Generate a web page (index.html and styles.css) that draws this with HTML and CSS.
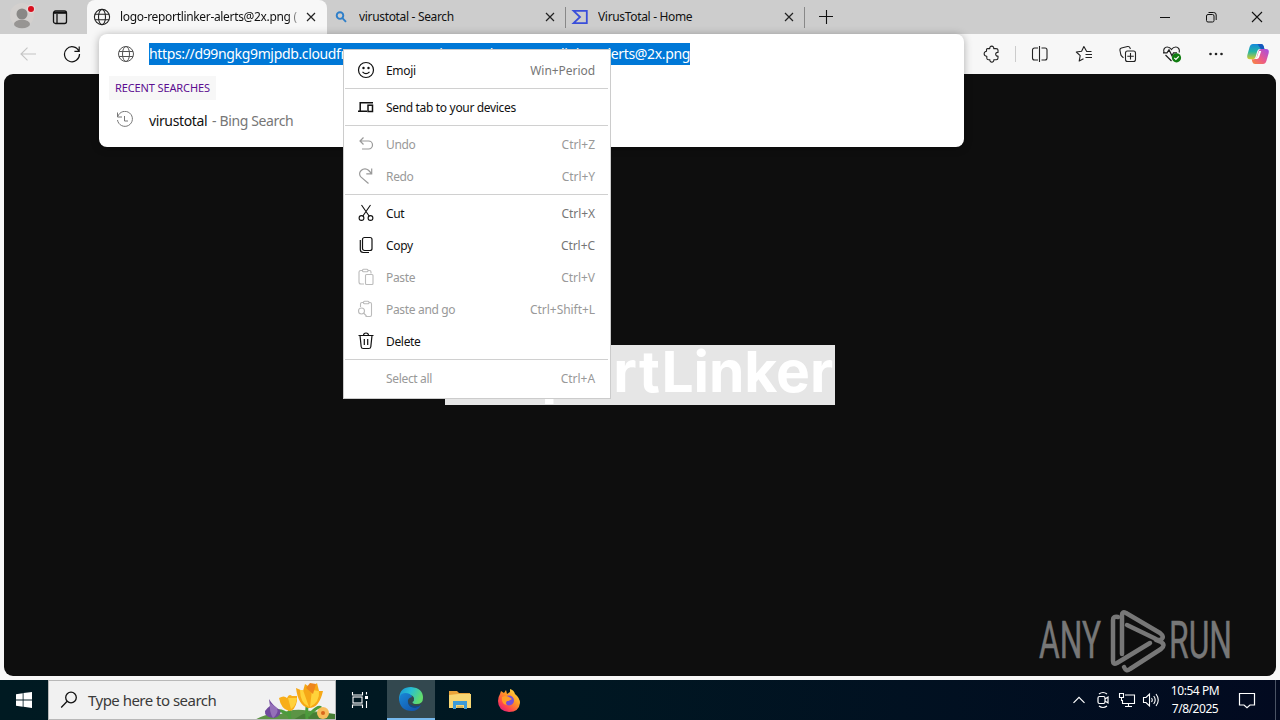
FILE: index.html
```html
<!DOCTYPE html>
<html lang="en">
<head>
    <meta charset="UTF-8">
    <meta name="viewport" content="width=device-width, initial-scale=1.0">
    <title>logo-reportlinker-alerts@2x.png</title>
    <link rel="stylesheet" href="styles.css">
</head>
<body>
    <div class="browser">
        <div class="tab-strip">
            <div class="profile">
                <svg width="32" height="30" viewBox="0 0 32 30">
                    <circle cx="16" cy="15" r="12" fill="#d3d0ce"/>
                    <circle cx="16" cy="14" r="5.5" fill="#8a8886"/>
                    <ellipse cx="16" cy="24" rx="8" ry="4.3" fill="#979593"/>
                    <circle cx="25" cy="9" r="4.3" fill="#e8d6d6"/>
                    <circle cx="25" cy="9" r="3" fill="#d80f1e"/>
                </svg>
            </div>
            <div class="tab-actions">
                <svg width="16" height="16" viewBox="0 0 16 16" fill="none" stroke="#111" stroke-width="1.3">
                    <rect x="1.5" y="2" width="13" height="12.5" rx="2"/>
                    <path d="M2 3.8h12" stroke-width="2"/>
                    <path d="M5 5v9"/>
                </svg>
            </div>
            <div class="tab active">
                <svg width="18" height="18" viewBox="0 0 18 18" fill="none" stroke="#222" stroke-width="1.1">
                    <circle cx="9" cy="9" r="7.6"/>
                    <ellipse cx="9" cy="9" rx="3.5" ry="7.6"/>
                    <path d="M2 6.3h14M2 11.7h14"/>
                </svg>
                <span class="tab-title fade">logo-reportlinker-alerts@2x.png (</span>
                <svg class="close" width="10" height="10" viewBox="0 0 10 10" stroke="#222" stroke-width="1.2"><path d="M1 1l8 8M9 1l-8 8"/></svg>
            </div>
            <div class="tab">
                <svg width="18" height="18" viewBox="0 0 18 18" fill="none" stroke="#2f7fc9" stroke-width="1.9">
                    <circle cx="8" cy="7.6" r="3.3"/>
                    <path d="M10.4 10.2l3.6 3.6"/>
                </svg>
                <span class="tab-title">virustotal - Search</span>
                <svg class="close" width="10" height="10" viewBox="0 0 10 10" stroke="#222" stroke-width="1.2"><path d="M1 1l8 8M9 1l-8 8"/></svg>
            </div>
            <div class="tab">
                <svg width="18" height="18" viewBox="0 0 18 18" fill="none" stroke="#394eda" stroke-width="1.8">
                    <path d="M2.6 2.8h13.2v12.4H2.6L9 9z"/>
                </svg>
                <span class="tab-title">VirusTotal - Home</span>
                <svg class="close" width="10" height="10" viewBox="0 0 10 10" stroke="#222" stroke-width="1.2"><path d="M1 1l8 8M9 1l-8 8"/></svg>
            </div>
            <div class="new-tab">
                <svg width="14" height="14" viewBox="0 0 14 14" stroke="#111" stroke-width="1.1"><path d="M7.500 0v14M0 6.500h14"/></svg>
            </div>
            <div class="window-buttons">
                <div><svg width="12" height="12" viewBox="0 0 12 12" fill="none" stroke="#111"><path d="M1 6.5h10"/></svg></div>
                <div><svg width="12" height="12" viewBox="0 0 12 12" fill="none" stroke="#111"><rect x="1.5" y="3.5" width="7.5" height="7.5" rx="1.5"/><path d="M3.5 1.5h5.2a2.5 2.5 0 0 1 2.5 2.5v5"/></svg></div>
                <div><svg width="12" height="12" viewBox="0 0 12 12" fill="none" stroke="#111" stroke-width="1.1"><path d="M1 1l10 10M11 1L1 11"/></svg></div>
            </div>
        </div>

        <div class="toolbar">
            <div class="nav-buttons">
                <div class="tool"><svg width="18" height="18" viewBox="0 0 18 18" fill="none" stroke="#c4c4c4" stroke-width="1.1"><path d="M17 9H2M8.5 2.7L2 9l6.5 6.3"/></svg></div>
                <div class="tool"><svg width="18" height="18" viewBox="0 0 18 18" fill="none" stroke="#111" stroke-width="1.2"><path d="M15.9 6.3A7.5 7.5 0 1 0 16.5 9M16.2 1.5v4.9h-4.8"/></svg></div>
            </div>
            <div class="tools">
                <div class="tool"><svg width="18" height="18" viewBox="0 0 18 18" fill="none" stroke="#222" stroke-width="1.1" stroke-linejoin="round"><path d="M4.500 6.200V4.600q0-1 1-1h2.300a2 2 0 1 1 3.900 0H14q2 0 2 1.400V7.400a1.900 1.900 0 1 0 0 3.700V13q0 1.700-1.700 1.700h-2.500a2 2 0 1 1-3.900 0H6.500q-1.500 0-1.700-1.500v-2a2.500 2.500 0 1 1 -.3-5z"/></svg></div>
                <div class="divider"></div>
                <div class="tool"><svg width="18" height="18" viewBox="0 0 18 18" fill="none" stroke="#222" stroke-width="1.1"><path d="M8.500 1v16M7 3H3.500a2 2 0 0 0-2 2v8a2 2 0 0 0 2 2H7M10.500 3h3.500a2 2 0 0 1 2 2v8a2 2 0 0 1-2 2h-3.500"/></svg></div>
                <div class="tool"><svg width="18" height="18" viewBox="0 0 18 18" fill="none" stroke="#222" stroke-width="1.1" stroke-linejoin="round"><path d="M16.500 6.500h-4.800L8.900 1.500 6.600 6.200l-5.300.8 3.900 3.700-1 5.300 4.300-2.200M10.500 9.500h6.500M10.500 12.500h6.500"/></svg></div>
                <div class="tool"><svg width="18" height="18" viewBox="0 0 18 18" fill="none" stroke="#222" stroke-width="1.1"><rect x="6.500" y="6" width="10" height="10.500" rx="2"/><path d="M11.500 8v6.500M8.300 11.300h6.500M4.500 12.800L2.600 11Q2 10.300 1.800 9.500L1 5.500q-.4-2 1.500-2.500l6-1.500q2-.3 2.500 1.300l.4 1.200"/></svg></div>
                <div class="tool"><svg width="20" height="18" viewBox="0 0 20 18" fill="none" stroke="#222" stroke-width="1.2"><path d="M2 7.500C.8 4.500 2.800 2 5.200 2 7.500 2 8.500 3 9.500 4.500 10.500 3 11.500 2 13.800 2c2.500 0 4.300 2.500 3.400 5.500M1 7.800h4l2-3 3 6 1.500-3H15M3.500 10l6 6"/><circle cx="14.500" cy="12.800" r="4.600" fill="#107c10" stroke="none"/><path d="M12.300 12.900l1.600 1.600 2.900-3.200" stroke="#fff"/></svg></div>
                <div class="tool"><svg width="18" height="18" viewBox="0 0 18 18" fill="#222"><circle cx="3.500" cy="9" r="1.300"/><circle cx="9" cy="9" r="1.300"/><circle cx="14.500" cy="9" r="1.300"/></svg></div>
                <div class="tool copilot">
                    <svg width="24" height="22" viewBox="0 0 24 22">
                        <defs>
                            <linearGradient id="cop-a" x1="0" y1="0" x2="0" y2="1"><stop offset="0" stop-color="#1488dc"/><stop offset=".5" stop-color="#24b5a4"/><stop offset="1" stop-color="#d8cb2a"/></linearGradient>
                            <linearGradient id="cop-b" x1="1" y1="0" x2="0" y2="1"><stop offset="0" stop-color="#a14ee8"/><stop offset=".55" stop-color="#ec5a88"/><stop offset="1" stop-color="#f98a3c"/></linearGradient>
                        </defs>
                        <path d="M7 1h8q2 0 2.600 2l.8 3H14q-2 0-2.700 2L9.500 14q-.7 2.300-2.800 2.300H4q-3.500 0-2.700-4L3.600 4Q4.500 1 7 1z" fill="url(#cop-a)"/>
                        <path d="M17 21H9q-2 0-2.600-2l-.7-2.700H8q2 0 2.800-2.300L12.600 8Q13.300 6 15.300 6H20q3.500 0 2.700 4l-2.300 8Q19.500 21 17 21z" fill="url(#cop-b)"/>
                        <path d="M11.500 1H15q2 0 2.600 2l.8 3h-3.600z" fill="#1558bd"/>
                        <path d="M11 14l2-6h2.200l-2 6q-.7 2-2.400 2H9z" fill="#fff"/>
                    </svg>
                </div>
            </div>
        </div>

        <div class="viewport">
            <div class="logo-image"><span>Repo<span class="wide">rt</span>Linker</span></div>
            <svg class="watermark" width="200" height="66" viewBox="0 0 200 66">
                <g fill="#777" stroke="#777" stroke-width=".5" font-family="Roboto, sans-serif" font-size="52">
                    <text x="1" y="50" textLength="62" lengthAdjust="spacingAndGlyphs">ANY</text>
                    <text x="131" y="50" textLength="63" lengthAdjust="spacingAndGlyphs">RUN</text>
                </g>
                <g fill="none" stroke="#777" stroke-width="4.5" stroke-linecap="round" stroke-linejoin="round">
                    <path d="M80 9q-5-1-5 3v41q0 4 4 2l33-20"/>
                    <path d="M84 46V7q0-4 4-2l34 20q5 4 1 6.500q-3 1.500-6-1L89 17"/>
                    <path d="M86 59q2 5 6 2l31-20q5-4 0-7l-5-2"/>
                </g>
            </svg>
        </div>
    </div>

    <div class="omnibox">
        <div class="omni-row url-row">
            <svg width="18" height="18" viewBox="0 0 18 18" fill="none" stroke="#555" stroke-width="1">
                <circle cx="9" cy="9" r="7.500"/>
                <ellipse cx="9" cy="9" rx="3.500" ry="7.500"/>
                <path d="M2 6.500h14M2 11.500h14"/>
            </svg>
            <div class="url"><span>https://d99ngkg9mjpdb.cloudfront.net/</span><span>images/logo-reportlinker-alerts@2x.png</span></div>
        </div>
        <div class="omni-heading">RECENT SEARCHES</div>
        <div class="omni-row recent">
            <svg width="18" height="18" viewBox="0 0 18 18" fill="none" stroke="#777" stroke-width="1">
                <path d="M1.500 1.500v4.500h4.500M1.800 5.500A7.500 7.500 0 1 1 1.500 9M8.500 5v5H12"/>
            </svg>
            <span class="query">virustotal</span><span class="source">- Bing Search</span>
        </div>
    </div>

    <div class="menu">
        <div class="item">
            <svg width="18" height="18" viewBox="0 0 18 18" fill="none" stroke="#111" stroke-width="1.2"><circle cx="9" cy="9" r="7.500"/><path d="M5.500 10.800q3.500 3.600 7 0"/><circle cx="6.500" cy="7" r=".6" fill="#111"/><circle cx="11.500" cy="7" r=".6" fill="#111"/></svg>
            <span>Emoji</span><kbd>Win+Period</kbd>
        </div>
        <hr>
        <div class="item">
            <svg width="18" height="18" viewBox="0 0 18 18" fill="none" stroke="#111" stroke-width="1.5"><path d="M3.200 13V4.700H16M1 13.200h9"/><rect x="11" y="7.200" width="4.500" height="6.300"/></svg>
            <span>Send tab to your devices</span>
        </div>
        <hr>
        <div class="item disabled">
            <svg width="18" height="18" viewBox="0 0 18 18" fill="none" stroke="#999" stroke-width="1.2"><path d="M6.500 2.500L3 6l3.500 3.500M3 6h8.500a4 4 0 0 1 0 8H5"/></svg>
            <span>Undo</span><kbd>Ctrl+Z</kbd>
        </div>
        <div class="item disabled">
            <svg width="18" height="18" viewBox="0 0 18 18" fill="none" stroke="#999" stroke-width="1.2"><path d="M14.700 1.500v5.300H9.300M14.500 6.500l-3-3.200Q9 1 6 2.200 2.500 4 2.600 7q.1 1.800 1.500 3.100L11.500 16.500"/></svg>
            <span>Redo</span><kbd>Ctrl+Y</kbd>
        </div>
        <hr>
        <div class="item">
            <svg width="18" height="18" viewBox="0 0 18 18" fill="none" stroke="#111" stroke-width="1.1"><path d="M4.500 1l7.800 11.300M13.500 1L5.700 12.300"/><circle cx="4.500" cy="14" r="2.400"/><circle cx="13.500" cy="14" r="2.400"/></svg>
            <span>Cut</span><kbd>Ctrl+X</kbd>
        </div>
        <div class="item">
            <svg width="18" height="18" viewBox="0 0 18 18" fill="none" stroke="#111" stroke-width="1.2"><rect x="5.500" y="1.500" width="9.500" height="13" rx="2"/><path d="M3.300 4v9.500q0 3 3 3H12"/></svg>
            <span>Copy</span><kbd>Ctrl+C</kbd>
        </div>
        <div class="item disabled">
            <svg width="18" height="18" viewBox="0 0 18 18" fill="none" stroke="#bbb" stroke-width="1.1"><path d="M7 16H4a2 2 0 0 1-2-2V4q0-1.500 2-1.500h2M11 2.500h1.500q1.500 0 1.500 1.500v1.500"/><rect x="5.500" y="1.200" width="5.500" height="2.500" rx="1"/><rect x="8.500" y="6.500" width="7.500" height="10" rx="1"/></svg>
            <span>Paste</span><kbd>Ctrl+V</kbd>
        </div>
        <div class="item disabled">
            <svg width="18" height="18" viewBox="0 0 18 18" fill="none" stroke="#bbb" stroke-width="1.1"><path d="M3.500 7V4q0-1.500 1.500-1.500h1.500M12 2.500h1q1.500 0 1.500 1.500v11q0 1.500-1.500 1.500H8.500M6.500 13l3 3"/><rect x="6.500" y="1.200" width="5.500" height="2.500" rx="1"/><circle cx="4.500" cy="11" r="3"/></svg>
            <span>Paste and go</span><kbd>Ctrl+Shift+L</kbd>
        </div>
        <div class="item">
            <svg width="18" height="18" viewBox="0 0 18 18" fill="none" stroke="#111" stroke-width="1.2"><path d="M1.500 3.500h15M6.500 3.500q0-2.500 2.500-2.500t2.500 2.500M3 3.500l1.200 11.200q.2 1.800 2 1.800h5.600q1.800 0 2-1.800L15 3.500M7.300 7v6M10.700 7v6"/></svg>
            <span>Delete</span>
        </div>
        <hr>
        <div class="item disabled">
            <svg width="18" height="18"></svg>
            <span>Select all</span><kbd>Ctrl+A</kbd>
        </div>
    </div>

    <div class="taskbar">
        <div class="start">
            <svg width="16" height="16" viewBox="0 0 16 16" fill="#fff"><path d="M0 2.200l6.700-1v6.400H0zM7.500 1.100L16 0v7.600H7.500zM0 8.400h6.700v6.400l-6.700-1zM7.500 8.400H16V16l-8.500-1.200z"/></svg>
        </div>
        <div class="search">
            <svg width="18" height="18" viewBox="0 0 18 18" fill="none" stroke="#111" stroke-width="1.3"><circle cx="11" cy="6.500" r="5.300"/><path d="M7.200 10.300L1.200 16.500"/></svg>
            <span>Type here to search</span>
            <svg class="flowers" width="80" height="38" viewBox="0 0 80 38">
                <path d="M0 39q9-7 26-6 8-5 22-4 15 1 31 5v5z" fill="#5c9445"/>
                <path d="M48 33q18-3 32 0v6H38z" fill="#477e35"/>
                <path d="M35 39q-1-10 0-14M52 38q-1-12 1-18M35 35q-8-6-12-5M53 35q10-11 13-8" fill="none" stroke="#4c9b3c" stroke-width="3"/>
                <path d="M14 18q4 7 11 11 2 6-6 8-10-1-9-7 2-3 5-5z" fill="#70499d"/>
                <path d="M15 22q-1 9 3 15 6-5 4-10z" fill="#9470b9"/>
                <path d="M24 17q5-3 8 0 2-5 5-2l5 0 0 5q-2 10-8 10-8-2-10-13z" fill="#f8ae19"/>
                <path d="M33 17l3 11q5-3 6-11z" fill="#ffd13c"/>
                <path d="M41 7l7 3 2-7 6 4 6-5 2 8 4 0q-4 18-15 17-10-3-12-20z" fill="#f6a817"/>
                <path d="M48 9l6 17q-9-4-9-17zM57 9l-2 17q10-5 9-16z" fill="#ffd33b"/>
                <path d="M51 7l4-5 6 1-3 10z" fill="#ee861c"/>
                <circle cx="68" cy="32" r="6" fill="#f8bd5b"/><circle cx="68" cy="32" r="2" fill="#d9661d"/>
            </svg>
        </div>
        <div class="task">
            <svg width="18" height="18" viewBox="0 0 18 18" fill="none" stroke="#fff" stroke-width="1.1"><path d="M1.500 1v3h10V1M1.500 17v-3h10v3"/><rect x="2" y="6" width="9" height="6"/><path d="M15.500 1v2.500M15.500 10v7"/><path d="M14 5h3v3h-3z" fill="#fff" stroke="none"/></svg>
        </div>
        <div class="task current">
            <svg width="24" height="24" viewBox="0 0 24 24">
                <defs>
                    <linearGradient id="edge-a" x1="0" y1="0" x2="1" y2=".4"><stop offset="0" stop-color="#198fd5"/><stop offset=".5" stop-color="#28bfd3"/><stop offset="1" stop-color="#61dc6d"/></linearGradient>
                    <linearGradient id="edge-b" x1="0" y1="0" x2="1" y2="1"><stop offset="0" stop-color="#1988d7"/><stop offset="1" stop-color="#124da5"/></linearGradient>
                </defs>
                <path d="M0 11Q1 0 12 0q12 1 12 11 0 6-6.500 6-4 0-4-2 2-1 1.500-4Q14 8 10 8q-7 0-10 6z" fill="url(#edge-a)"/>
                <path d="M0 12q1-6 6-6 6 0 7 4-5 1-4 6 2 6 9 4 3-1 4-2-3 6-9 6Q1 24 0 12z" fill="url(#edge-b)"/>
                <path d="M9 12q-1 8 7 9 4-1 6-3-4 2-8 1-6-2-5-7z" fill="#0d478f"/>
            </svg>
        </div>
        <div class="task">
            <svg width="22" height="20" viewBox="0 0 22 20">
                <path d="M0 1h8l2 2h11v15H0z" fill="#e9a43a"/>
                <path d="M0 5l9-1h13v14H0z" fill="#f7d673"/>
                <path d="M4 11h14v8h-3v-4H7v4H4z" fill="#3b9bd8"/>
                <path d="M8 16h6v2H8z" fill="#d8b65b"/>
            </svg>
        </div>
        <div class="task">
            <svg width="24" height="24" viewBox="0 0 24 24">
                <defs>
                    <linearGradient id="fox" x1="1" y1="0" x2=".2" y2="1"><stop offset="0" stop-color="#fff04c"/><stop offset=".45" stop-color="#ff9825"/><stop offset=".8" stop-color="#ff4050"/><stop offset="1" stop-color="#d5217f"/></linearGradient>
                </defs>
                <path d="M3 6l1-3 3 2 2-3 1 4 3-2 0-3q4 1 5 5 5 4 5 9-1 9-11 9Q1 23 1 13q0-4 2-7z" fill="url(#fox)"/>
                <circle cx="12" cy="12.500" r="5" fill="#7550d8"/>
                <path d="M5 9q4-2 7 0l3 2q-3 2-5 2-2 2 0 4-6-1-5-8z" fill="#ff9e26"/>
            </svg>
        </div>
        <div class="tray">
            <div class="tray-icon"><svg width="14" height="14" viewBox="0 0 14 14" fill="none" stroke="#fff" stroke-width="1.2"><path d="M1.500 9.800L7 4.300l5.500 5.500"/></svg></div>
            <div class="tray-icon"><svg width="16" height="18" viewBox="0 0 16 18" fill="none" stroke="#fff" stroke-width="1.2"><rect x="3" y="5.500" width="7" height="7" rx="1.500"/><path d="M10 8l3-2v6l-3-2M4 3q4-3 8 0M4 15q4 3 8 0"/></svg></div>
            <div class="tray-icon"><svg width="18" height="16" viewBox="0 0 18 16" fill="none" stroke="#fff" stroke-width="1.1"><path d="M7 3h9.500v8.500h-12V8M10.500 12v2.500M7 14.500h7"/><path d="M1.500 1.500h4v4h-4zM3.500 6v2.500h1.500"/></svg></div>
            <div class="tray-icon"><svg width="18" height="16" viewBox="0 0 18 16" fill="none" stroke="#fff" stroke-width="1.1"><path d="M1.500 5.500h2.500l3.500-3.500v12L4 10.500H1.500zM9.500 6q1.500 2 0 4M11.700 4q3 4 0 8M14 2q4.500 6 0 12"/></svg></div>
            <div class="clock"><div>10:54 PM</div><div>7/8/2025</div></div>
            <div class="notifications"><svg width="18" height="18" viewBox="0 0 18 18" fill="none" stroke="#fff" stroke-width="1.2"><path d="M1.500 2.500h15v11.500H12l-3 2.700L6 14H1.500z"/></svg></div>
        </div>
    </div>
</body>
</html>
```

FILE: styles.css
```css
* {
    box-sizing: border-box;
}

body {
    margin: 0;
    width: 1280px;
    height: 720px;
    overflow: hidden;
    position: relative;
    font-family: "Noto Sans", "Open Sans", sans-serif;
    font-size: 12px;
    color: #111;
    background-color: #f7f7f7;
}

svg {
    display: block;
    flex: none;
}

.browser {
    height: 680px;
    display: flex;
    flex-direction: column;
}

/* tabs */
.tab-strip {
    height: 34px;
    display: flex;
    background-color: #cdcdcd;
}

.profile {
    width: 44px;
    padding-left: 6px;
}

.tab-actions {
    width: 43px;
    padding: 9px 0 0 8px;
}

.tab {
    width: 239px;
    height: 34px;
    padding: 0 10px 0 5px;
    display: flex;
    align-items: center;
    gap: 9px;
    border-right: 1px solid transparent;
    border-image: linear-gradient(transparent 8px, #888 8px, #888 27px, transparent 27px) 1;
}

.tab.active {
    width: 240px;
    padding-left: 6px;
    padding-right: 11px;
    background-color: #f7f7f7;
    border-image: none;
    border-right: none;
    border-radius: 8px 8px 0 0;
}

.tab-title {
    flex: 1;
    white-space: nowrap;
    overflow: hidden;
    line-height: 18px;
    padding-bottom: 1px;
    letter-spacing: -0.33px;
}

.fade {
    -webkit-mask-image: linear-gradient(to right, #000 168px, transparent 182px);
    mask-image: linear-gradient(to right, #000 168px, transparent 182px);
}

.new-tab {
    width: 44px;
    padding: 10px 0 0 14px;
}

.window-buttons {
    margin-left: auto;
    display: flex;
}

.window-buttons div {
    width: 46px;
    display: flex;
    align-items: center;
    justify-content: center;
}

/* toolbar */
.toolbar {
    height: 40px;
    display: flex;
    justify-content: space-between;
    align-items: center;
}

.nav-buttons, .tools {
    display: flex;
    align-items: center;
}

.nav-buttons {
    padding-left: 6px;
}

.tools {
    padding-right: 2px;
}

.tool {
    width: 44px;
    display: flex;
    justify-content: center;
}

.copilot {
    width: 40px;
}

.divider {
    width: 1px;
    height: 16px;
    margin: 0 2px;
    background-color: #ccc;
}

/* page */
.viewport {
    height: 602px;
    margin: 0 4px;
    padding-top: 271px;
    background-color: #0e0e0e;
    border-radius: 9px;
    display: flex;
    flex-direction: column;
    align-items: center;
}

.logo-image {
    width: 390px;
    height: 60px;
    padding-right: 2px;
    background-color: #e6e6e6;
    color: #fff;
    font-family: Inter, sans-serif;
    font-size: 57px;
    font-weight: 700;
    line-height: 53px;
    letter-spacing: -0.1px;
    white-space: nowrap;
    display: flex;
    justify-content: flex-end;
}

.wide {
    letter-spacing: 1.5px;
    margin-left: 1px;
}

.watermark {
    margin: 203px 38px 0 auto;
}

/* address bar dropdown */
.omnibox {
    position: absolute;
    left: 99px;
    top: 34px;
    width: 865px;
    height: 113px;
    padding: 3px 10px;
    background-color: #fff;
    border-radius: 8px;
    box-shadow: 0 1px 8px rgba(0, 0, 0, 0.3);
}

.omni-row {
    height: 34px;
    padding-left: 7px;
    display: flex;
    align-items: center;
    font-size: 14px;
    letter-spacing: -0.38px;
    white-space: nowrap;
}

.url-row {
    padding-left: 8px;
}

.recent {
    margin-top: 3px;
}

.url {
    width: 541px;
    height: 22px;
    margin-left: 14px;
    line-height: 22px;
    background-color: #0078d7;
    color: #fff;
    display: flex;
    justify-content: space-between;
    letter-spacing: -0.35px;
}

.omni-heading {
    width: 107px;
    height: 24px;
    margin-top: 5px;
    padding-left: 6px;
    line-height: 24px;
    background-color: #f7f7f7;
    color: #5c0d91;
    font-size: 11px;
    letter-spacing: -0.12px;
    white-space: nowrap;
}

.query {
    margin-left: 15px;
}

.source {
    margin-left: 5px;
    color: #767676;
}

/* context menu */
.menu {
    position: absolute;
    left: 343px;
    top: 49px;
    width: 268px;
    height: 350px;
    padding: 5px 0 3px;
    background-color: #fff;
    border: 1px solid #ccc;
}

.item {
    height: 32px;
    padding: 0 15px 2px 13px;
    display: flex;
    align-items: center;
    gap: 11px;
    letter-spacing: -0.33px;
}

.item kbd {
    margin-left: auto;
    font-family: inherit;
    font-size: 12px;
    color: #767676;
    letter-spacing: -0.05px;
}

.item.disabled, .item.disabled kbd {
    color: #999;
}

.menu hr {
    height: 1px;
    margin: 1px 2px 3px 1px;
    border: none;
    background-color: #d0d0d0;
}

/* taskbar */
.taskbar {
    height: 40px;
    display: flex;
    background: linear-gradient(to right, #001a22, #001722 45%, #020a20);
    color: #fff;
}

.start {
    width: 48px;
    display: flex;
    align-items: center;
    justify-content: center;
}

.search {
    width: 288px;
    padding-left: 11px;
    display: flex;
    align-items: center;
    gap: 10px;
    background-color: #f1f1f1;
    border: 1px solid #b8b8b8;
    color: #3a3a3a;
    font-size: 15px;
    letter-spacing: -0.52px;
    white-space: nowrap;
}

.flowers {
    margin-left: auto;
}

.task {
    width: 49px;
    display: flex;
    align-items: center;
    justify-content: center;
}

.current {
    background-color: #33484f;
    border-bottom: 2px solid #76b9ed;
}

.task:nth-child(3) {
    width: 51px;
    padding-right: 3px;
}

.task.current {
    width: 48px;
}

.tray {
    margin-left: auto;
    display: flex;
    align-items: center;
}

.tray-icon {
    width: 24px;
    display: flex;
    justify-content: center;
}

.clock {
    width: 64px;
    text-align: center;
    line-height: 18px;
    letter-spacing: -0.45px;
    white-space: nowrap;
}

.notifications {
    width: 49px;
    height: 40px;
    margin-right: 4px;
    padding: 11px 0 0 11px;
    border-right: 1px solid #4a5364;
}
```
